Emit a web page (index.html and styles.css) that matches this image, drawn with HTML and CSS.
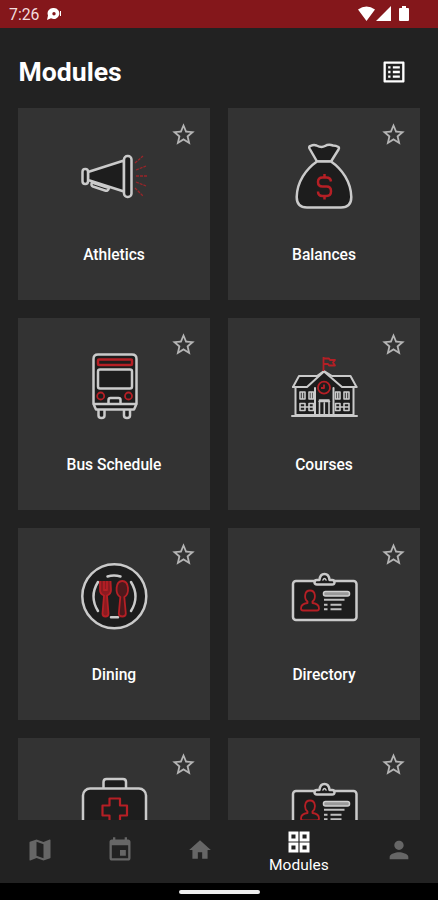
FILE: index.html
```html
<!DOCTYPE html>
<html lang="en">
<head>
<meta charset="utf-8">
<title>Modules</title>
<link rel="stylesheet" href="styles.css">
</head>
<body>
<svg class="defs" aria-hidden="true">
  <symbol id="star" viewBox="0 0 24 24"><path d="M22 9.24l-7.19-.62L12 2 9.19 8.63 2 9.24l5.46 4.73L5.82 21 12 17.27 18.18 21l-1.63-7.03L22 9.24zM12 15.4l-3.76 2.27 1-4.28-3.32-2.88 4.38-.38L12 6.1l1.71 4.04 4.38.38-3.32 2.88 1 4.28L12 15.4z"/></symbol>
  <symbol id="directory" viewBox="0 0 72 72">
    <rect class="line solid" x="5" y="21" width="63.500" height="39" rx="3"/>
    <path class="line solid" d="M29 24.500q-2.500 0-2.500-2.200t2.500-2.300h2.500q.5-6 5-6t5 6h2.500q2.500 0 2.500 2.300t-2.500 2.200z"/>
    <path class="line thin" d="M35 20q1.500-3 3 0"/>
    <path class="accent" d="M19.500 41.500c-3.500-2.500-3.500-11 2.500-11s6 8.500 2.500 11v1.500c5 .5 6.500 2.500 6.500 5.500q0 2-2 2h-14q-2 0-2-2c0-3 1.500-5 6.500-5.500z"/>
    <rect class="bar" x="35.500" y="31.500" width="26" height="4.500" rx="2"/>
    <path class="line rows" d="M36 39.800h20.500M36 44.700h3.500M42.500 44.700h11M36 49.300h3.500M42.500 49.300h11"/>
  </symbol>
</svg>
<div class="screen">
  <div class="status">
    <span class="time">7:26</span>
    <svg class="notice" viewBox="0 0 16 14"><path fill-rule="evenodd" d="M8 1a5.500 5.500 0 1 1-3 10.200L1 13l1-4.500A5.500 5.500 0 0 1 8 1zm0 4a1.700 1.700 0 1 0 0 3.400A1.700 1.700 0 0 0 8 5zM14 4h1v5h-1z"/></svg>
    <svg class="signals" viewBox="0 0 52 16"><path d="M0 3.500Q8.500-2.500 17 3.500L8.500 15zM33 0v15H18zM42 2h2V0h4v2h2q1 0 1 1v11q0 1-1 1h-8q-1 0-1-1V3q0-1 1-1z"/></svg>
  </div>
  <header class="header">
    <h1>Modules</h1>
    <svg class="list" viewBox="0 0 24 24"><path d="M19 5v14H5V5h14m1.100-2H3.900c-.5 0-.9.4-.9.900v16.200c0 .4.400.9.900.900h16.200c.4 0 .9-.5.900-.900V3.900c0-.5-.5-.9-.9-.900zM11 7h6v2h-6V7zm0 4h6v2h-6v-2zm0 4h6v2h-6zM7 7h2v2H7zm0 4h2v2H7zm0 4h2v2H7z"/></svg>
  </header>
  <main class="grid">
    <section class="card">
      <svg class="star"><use href="#star"/></svg>
      <svg class="art" viewBox="0 0 72 72">
        <path class="line solid" d="M10 32L46 20.500v31L10 40z"/>
        <rect class="line solid" x="4.500" y="29" width="5.500" height="15" rx="2.700"/>
        <path class="line solid" d="M14 42.500q-1.500 3 1 4l12 4q3 1 4-2.500z"/>
        <rect class="line solid" x="46" y="16" width="7.500" height="41" rx="3.500"/>
        <path class="accent rays" d="M57 23l8-7M58 30l10-4M58 36h11M58 42l10 4M57 48l8 8"/>
      </svg>
      <h2>Athletics</h2>
    </section>
    <section class="card">
      <svg class="star"><use href="#star"/></svg>
      <svg class="art" viewBox="0 0 72 72">
        <path class="line solid" d="M29 21.500L21.500 8.500q-1-2 1-2.500 3-1.500 6-.5 5 2.500 8.500.5t8-.5q3 0 5.500 1.500 1 1 0 2.500L43 21.500z"/>
        <path class="line solid" d="M29 21.500C18 29 9 42 8.700 57q0 10.500 10.300 10.500h34q10.300 0 10.300-10.500C63 42 54 29 43 21.500z"/>
        <path class="accent bold" d="M43 41.500q-.5-4-4.500-4h-4q-4.500 0-4.500 4.500t4.500 4.500h4q4.500 0 4.500 4.700t-4.500 4.800h-4q-4.500 0-4.500-4.500M36.500 34v3.500M36.500 56v3.500"/>
      </svg>
      <h2>Balances</h2>
    </section>
    <section class="card">
      <svg class="star"><use href="#star"/></svg>
      <svg class="art" viewBox="0 0 72 72">
        <path class="line solid" d="M20.500 59v6.500q0 2.500 3 2.500t3-2.500V59M46 59v6.500q0 2.500 3 2.500t3-2.500V59"/>
        <path class="line solid" d="M15.500 54V9q0-4.500 4.500-4.500h34q4.500 0 4.500 4.500v45l-2.500 5.500h-38zM15.500 54h43"/>
        <rect class="accent bold" x="20" y="9.500" width="34" height="5.500" rx="1"/>
        <rect class="line" x="20" y="19.500" width="34" height="19" rx="2"/>
        <circle class="accent" cx="22.700" cy="46" r="3.500"/><circle class="accent" cx="50.500" cy="46" r="3.500"/>
        <path class="line" d="M30.500 53v-3q0-2 2-2h8q2 0 2 2v3"/>
      </svg>
      <h2>Bus Schedule</h2>
    </section>
    <section class="card">
      <svg class="star"><use href="#star"/></svg>
      <svg class="art" viewBox="0 0 72 72">
        <path class="line solid mid" d="M7.500 65V37H5L11 26h18l7-5 8 5h18.500l6 11h-3v28z"/>
        <path class="line solid mid" d="M5 37h14l17-15.500L54 37h14.500M27 38v27M45.500 38v27M4 66h65"/>
        <path class="line thin" d="M12 42h5v7h-5zM21 42h4.500v7H21zM12 53.500h5v7h-5zM21 53.500h4.500v7H21zM47.500 42h4.500v7h-4.500zM56 42h5v7h-5zM47.500 53.500h4.500v7h-4.500zM56 53.500h5v7h-5zM14.500 42v7M23.300 42v7M49.700 42v7M58.500 42v7M12 57h13.500M47.500 57H61M31.500 65V50H41v15M36.300 53v12M31 51.500h10.500"/>
        <circle class="accent" cx="36" cy="37.700" r="6"/>
        <path class="accent" d="M36 34.500v3.500h-3M35.500 21V7M36 8.500h5l1 1.500h5l-2 2.500 2 3h-6l-1-1.500h-4"/>
      </svg>
      <h2>Courses</h2>
    </section>
    <section class="card">
      <svg class="star"><use href="#star"/></svg>
      <svg class="art" viewBox="0 0 72 72">
        <circle class="line solid" cx="36.300" cy="36.300" r="32"/>
        <path class="line" d="M29.500 16.500q6.500-2 13 0M33 57.200h7M20 22q-9 14.500 0 29M53 22q9 14.500 0 29"/>
        <path class="accent fork" d="M22 21v9q0 4 4 5.500l-1.500 18q0 3 3 3t3-3L29 35.500q4-1.500 4-5.500l-.5-9M26 21v9h3v-9"/>
        <path class="accent spoon" d="M44.300 21c-7 0-7.500 13-2 16l-1.500 16.500q0 3 3.500 3t3.500-3L46.300 37c5.500-3 5-16-2-16z"/>
      </svg>
      <h2>Dining</h2>
    </section>
    <section class="card">
      <svg class="star"><use href="#star"/></svg>
      <svg class="art"><use href="#directory"/></svg>
      <h2>Directory</h2>
    </section>
    <section class="card">
      <svg class="star"><use href="#star"/></svg>
      <svg class="art" viewBox="0 0 72 72">
        <path class="line solid" d="M25.500 18v-6q0-3 3-3H45q3 0 3 3v6"/>
        <rect class="line solid" x="5" y="18.500" width="63" height="48" rx="7"/>
        <path class="accent cross" d="M31.500 28.500h10.500v7h7v10h-7v7H31.500v-7h-7v-10h7z"/>
      </svg>
    </section>
    <section class="card">
      <svg class="star"><use href="#star"/></svg>
      <svg class="art"><use href="#directory"/></svg>
    </section>
  </main>
  <nav class="tabs">
    <a class="tab"><svg viewBox="0 0 24 24"><path d="M20.500 3l-.16.030L15 5.100 9 3 3.360 4.900c-.21.070-.36.250-.36.480V20.500c0 .28.220.5.500.5l.16-.030L9 18.900l6 2.100 5.640-1.900c.21-.070.360-.25.360-.48V3.500c0-.28-.22-.5-.5-.5zM15 19l-6-2.110V5l6 2.110V19z"/></svg></a>
    <a class="tab"><svg viewBox="0 0 24 24"><path d="M17 12h-5v5h5v-5zM16 1v2H8V1H6v2H5c-1.110 0-1.990.9-1.990 2L3 19c0 1.100.890 2 2 2h14c1.100 0 2-.9 2-2V5c0-1.100-.9-2-2-2h-1V1h-2zm3 18H5V8h14v11z"/></svg></a>
    <a class="tab home"><svg viewBox="0 0 24 24"><path d="M10 20v-6h4v6h5v-8h3L12 3 2 12h3v8z"/></svg></a>
    <a class="tab active"><svg viewBox="0 0 24 24"><path fill-rule="evenodd" d="M3 3h8.500v8.500H3zM12.500 3H21v8.500h-8.500zM3 12.500h8.500V21H3zM12.500 12.500H21V21h-8.500zM5.500 5.500V9H9V5.500zM15 5.500V9h3.500V5.500zM5.500 15v3.500H9V15zM15 15v3.500h3.500V15z"/></svg><span>Modules</span></a>
    <a class="tab"><svg viewBox="0 0 24 24"><path d="M12 12c2.210 0 4-1.790 4-4s-1.790-4-4-4-4 1.790-4 4 1.790 4 4 4zm0 2c-2.670 0-8 1.340-8 4v2h16v-2c0-2.660-5.330-4-8-4z"/></svg></a>
  </nav>
  <div class="gesture"><span></span></div>
</div>
</body>
</html>
```
FILE: styles.css
```css
* { box-sizing: border-box; }
body { margin: 0; background: #222; color: #fff; font-family: Roboto, sans-serif; }
svg { display: block; fill: currentColor; flex: none; }
.defs { position: absolute; width: 0; height: 0; }
.screen { width: 438px; height: 900px; display: flex; flex-direction: column; overflow: hidden; }
.status { height: 28px; flex: none; display: flex; align-items: center; padding: 0 28px 0 9px; background: #84171b; }
.time { font-size: 15.8px; line-height: 28px; padding-top: 2px; color: #f3dedf; }
.notice { width: 16px; height: 14px; margin-left: 7px; }
.signals { width: 52px; height: 16px; margin-left: auto; }
.header { height: 80px; flex: none; display: flex; align-items: center; justify-content: space-between; padding: 8px 30px 0 18.5px; }
h1 { margin: 0; font-size: 26.6px; line-height: 32px; font-weight: 700; }
.list { width: 28px; height: 28px; }
.grid { flex: 1; min-height: 0; overflow: hidden; display: grid; grid-template-columns: 192px 192px; grid-auto-rows: 192px; gap: 18px; padding: 0 18px; align-content: start; }
.card { position: relative; display: flex; flex-direction: column; align-items: center; padding-top: 32px; background: #333; }
.star { position: absolute; top: 13px; right: 13px; width: 27px; height: 27px; color: #b4b4b4; }
.art { width: 72px; height: 72px; }
h2 { margin: 33px 0 0; font-size: 15.6px; line-height: 20px; font-weight: 500; }
.line { fill: none; stroke: #cacaca; stroke-width: 2.5; stroke-linecap: round; stroke-linejoin: round; }
.solid { fill: #1d1d1d; }
.mid { stroke-width: 2; }
.thin { stroke-width: 1.6; }
.rows { stroke-width: 2; stroke-linecap: butt; stroke: #c0c0c0; }
.bar { fill: #999; stroke: #d0d0d0; stroke-width: 1.5; }
.accent { fill: none; stroke: #b51f25; stroke-width: 1.8; stroke-linejoin: round; }
.bold { stroke-width: 2.5; }
.cross { stroke-width: 2.2; }
.rays { stroke: #9b2529; stroke-width: 1.3; stroke-dasharray: 3 1; }
.fork { fill: #8b1b20; }
.spoon { fill: #4d191c; }
.tabs { height: 63px; flex: none; display: flex; }
.tab { flex: 1 1 0; display: flex; flex-direction: column; align-items: center; padding: 16px 0 0 1px; color: #666; }
.tab svg { width: 28px; height: 28px; }
.home svg { width: 26px; height: 26px; margin-top: 1px; }
.active { flex-grow: 1.5; padding: 8px 0 0; color: #fff; }
.active span { font-size: 15.5px; line-height: 18px; }
.gesture { height: 17px; flex: none; display: flex; justify-content: center; padding-top: 7px; background: #000; }
.gesture span { width: 81px; height: 4px; border-radius: 2px; background: #eee; }
```
